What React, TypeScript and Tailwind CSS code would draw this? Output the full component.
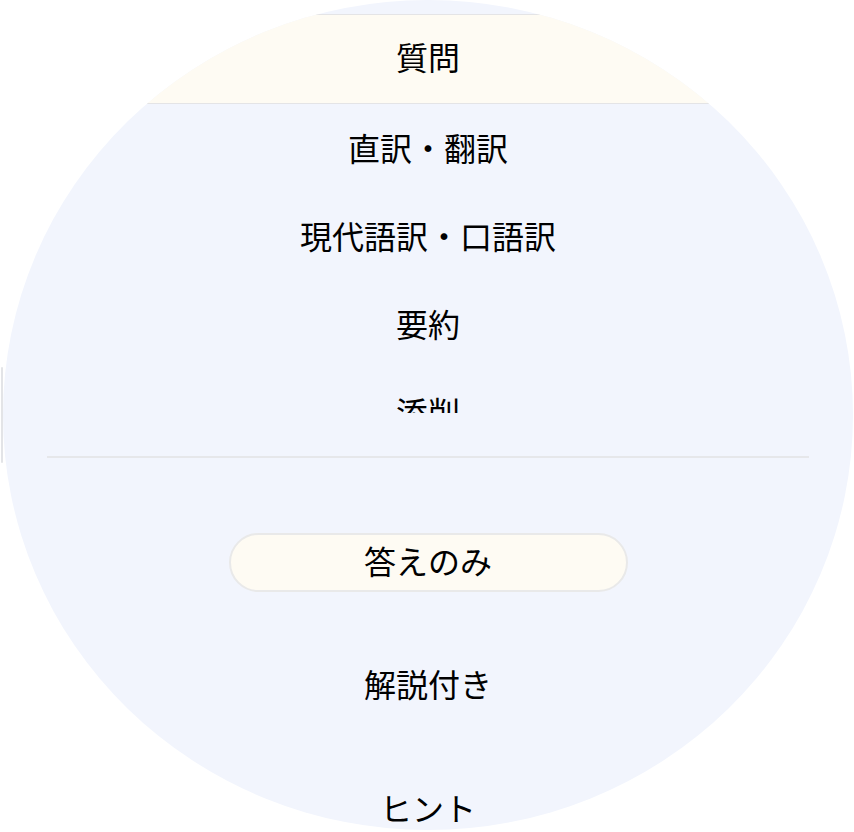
import React from "react";

const font = { fontFamily: '"Noto Sans CJK JP", "Noto Sans", sans-serif' };

const topItems = ["直訳・翻訳", "現代語訳・口語訳", "要約", "添削"];
const bottomItems = ["解説付き", "ヒント"];

export default function App() {
  return (
    <div className="flex h-[832px] w-[854px] bg-white text-black" style={font}>
      <div className="w-[3px] shrink-0 pl-[1px] pt-[367px]">
        <div className="h-[96px] w-[2px] rounded-full bg-[#e3e4e7]" />
      </div>
      <div className="flex h-[830px] w-[850px] shrink-0 flex-col overflow-hidden rounded-[50%] bg-[#f2f5fd]">
        <div className="h-[413px] shrink-0 overflow-hidden pt-[14px]">
          <div className="flex h-[90px] items-center justify-center border-y border-[#e4e4e6] bg-[#fefbf3] pb-[6px] text-[32px] leading-none">
            質問
          </div>
          {topItems.map((t) => (
            <div
              key={t}
              className="flex h-[88px] items-center justify-center pb-[3px] text-[32px] leading-none"
            >
              {t}
            </div>
          ))}
        </div>
        <div className="mx-[44px] mt-[43px] h-[2px] shrink-0 bg-[#e6e7ea]" />
        <div className="flex shrink-0 flex-col pt-[42px]">
          <div className="flex h-[124px] items-center justify-center">
            <div className="flex h-[59px] w-[399px] items-center justify-center rounded-full border-2 border-[#e9e9e9] bg-[#fefbf3] pb-[5px] text-[32px] leading-none">
              答えのみ
            </div>
          </div>
          {bottomItems.map((t) => (
            <div
              key={t}
              className="flex h-[124px] items-center justify-center pb-[6px] text-[32px] leading-none"
            >
              {t}
            </div>
          ))}
        </div>
      </div>
    </div>
  );
}
